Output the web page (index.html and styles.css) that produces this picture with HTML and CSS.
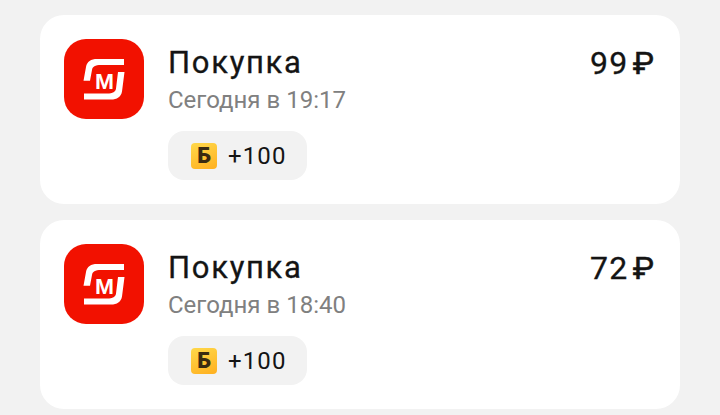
FILE: index.html
```html
<!DOCTYPE html>
<html lang="ru">
<head>
    <meta charset="UTF-8">
    <title>Покупки</title>
    <link rel="stylesheet" href="styles.css">
</head>
<body>
    <div class="list">
        <!-- Purchase 1 -->
        <div class="card">
            <div class="logo">
                <svg viewBox="0 0 80 80" width="80" height="80">
                    <path class="mark" d="M60 20V26H37C31 26 28.5 27.5 28 31L26 41.7H19.5L22 28C23 22.5 27 20 33 20Z"/>
                    <path class="mark" d="M20 60.5V54.5H43C49 54.5 51.5 53 52 49.5L54 33H60.5L58 52.5C57 58 53 60.5 47 60.5Z"/>
                    <text class="logo-m" x="31" y="49.5" textLength="19" lengthAdjust="spacingAndGlyphs">М</text>
                </svg>
            </div>
            <div class="info">
                <div class="title">Покупка</div>
                <div class="time">Сегодня в 19:17</div>
                <div class="bonus">
                    <span class="coin">Б</span>
                    <span class="points">+100</span>
                </div>
            </div>
            <div class="price">99<span class="rub">₽</span></div>
        </div>

        <!-- Purchase 2 -->
        <div class="card">
            <div class="logo">
                <svg viewBox="0 0 80 80" width="80" height="80">
                    <path class="mark" d="M60 20V26H37C31 26 28.5 27.5 28 31L26 41.7H19.5L22 28C23 22.5 27 20 33 20Z"/>
                    <path class="mark" d="M20 60.5V54.5H43C49 54.5 51.5 53 52 49.5L54 33H60.5L58 52.5C57 58 53 60.5 47 60.5Z"/>
                    <text class="logo-m" x="31" y="49.5" textLength="19" lengthAdjust="spacingAndGlyphs">М</text>
                </svg>
            </div>
            <div class="info">
                <div class="title">Покупка</div>
                <div class="time">Сегодня в 18:40</div>
                <div class="bonus">
                    <span class="coin">Б</span>
                    <span class="points">+100</span>
                </div>
            </div>
            <div class="price">72<span class="rub">₽</span></div>
        </div>
    </div>
</body>
</html>
```

FILE: styles.css
```css
body {
    margin: 0;
    height: 415px;
    overflow: hidden;
    background-color: #f2f2f2;
    font-family: Roboto, "Noto Sans", sans-serif;
    color: #141414;
}
.list {
    display: flex;
    flex-direction: column;
    gap: 16px;
    padding: 15px 40px 0;
}
.card {
    display: flex;
    height: 189px;
    box-sizing: border-box;
    padding: 24px 26px 0 24px;
    background-color: #fff;
    border-radius: 24px;
}
.logo {
    width: 80px;
    height: 80px;
    border-radius: 22px;
    background-color: #f21100;
    overflow: hidden;
}
.mark {
    fill: #fff;
}
.logo-m {
    fill: #fff;
    font-family: "Liberation Sans", sans-serif;
    font-size: 22px;
    font-weight: 700;
}
.info {
    flex: 1;
    margin-left: 24px;
}
.title {
    margin-top: 6px;
    font-size: 31px;
    line-height: 36px;
    letter-spacing: 1.7px;
    -webkit-text-stroke: 0.3px #141414;
}
.time {
    margin-top: 4px;
    font-size: 24px;
    line-height: 30px;
    color: #808080;
}
.bonus {
    display: inline-flex;
    align-items: center;
    margin-top: 16px;
    height: 49px;
    padding: 0 21px 0 23px;
    background-color: #f2f2f2;
    border-radius: 16px;
}
.coin {
    width: 26px;
    height: 26px;
    border-radius: 4px;
    background: linear-gradient(160deg, #ffd84a, #ffb020);
    color: #3a2a10;
    font-size: 22px;
    font-weight: 900;
    line-height: 26px;
    text-align: center;
}
.points {
    margin-left: 11px;
    font-size: 24px;
    letter-spacing: 1.1px;
}
.price {
    margin-top: 6px;
    font-size: 32px;
    line-height: 36px;
    letter-spacing: 1.4px;
    -webkit-text-stroke: 0.3px #141414;
}
.rub {
    margin-left: 4px;
    letter-spacing: 0;
    -webkit-text-stroke: 0.5px #141414;
}
```
